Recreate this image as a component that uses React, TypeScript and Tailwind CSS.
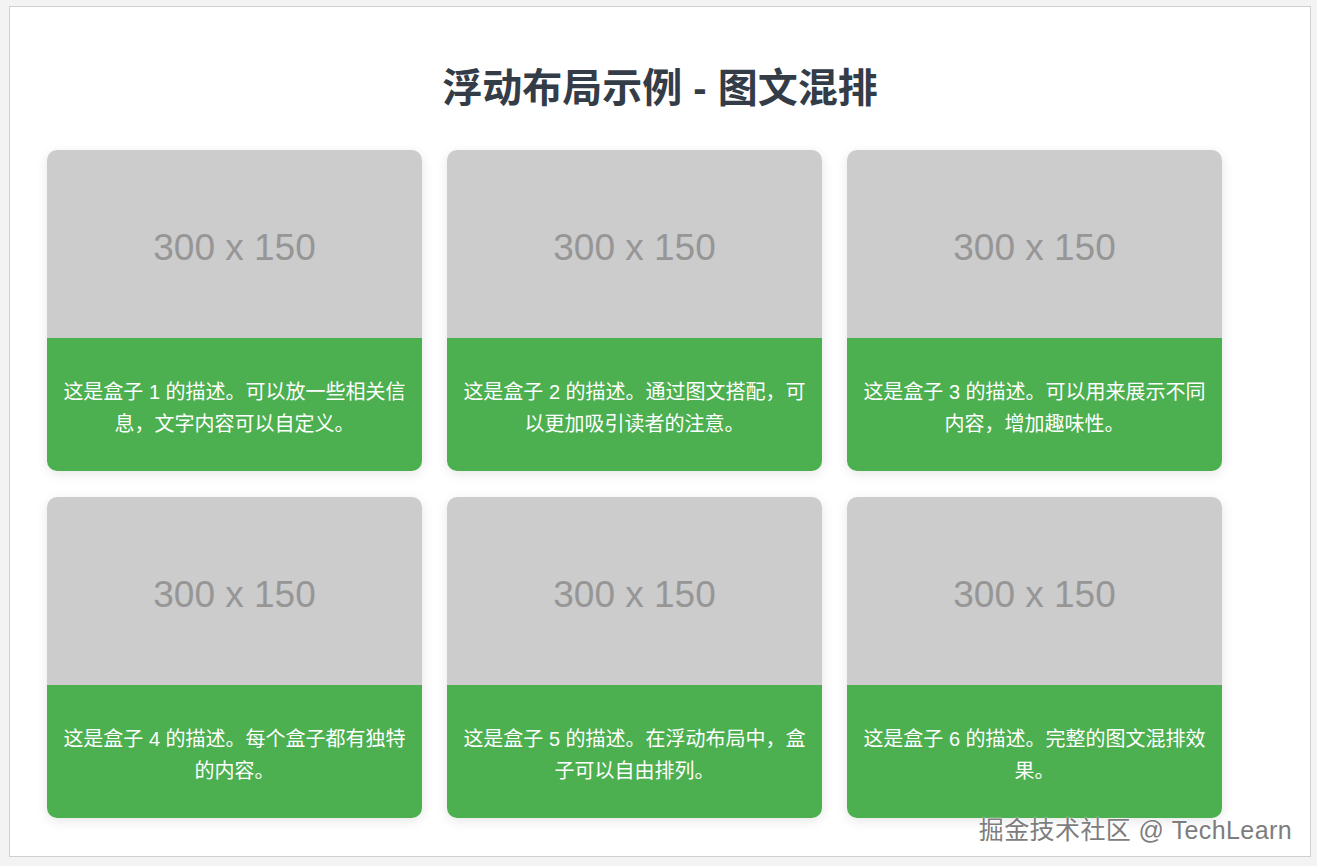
const boxes = [
  "这是盒子 1 的描述。可以放一些相关信息，文字内容可以自定义。",
  "这是盒子 2 的描述。通过图文搭配，可以更加吸引读者的注意。",
  "这是盒子 3 的描述。可以用来展示不同内容，增加趣味性。",
  "这是盒子 4 的描述。每个盒子都有独特的内容。",
  "这是盒子 5 的描述。在浮动布局中，盒子可以自由排列。",
  "这是盒子 6 的描述。完整的图文混排效果。",
];

const font = { fontFamily: '"Liberation Sans", Arial, "Noto Sans CJK SC", sans-serif' };

export default function App() {
  return (
    <div className="min-h-[866px] w-[1317px] bg-[#f3f3f3] pl-[9px] pt-[6px]" style={font}>
      <div className="relative h-[851px] w-[1302px] border border-[#cfcfcf] bg-white pl-[37px] pt-[57px]">
        <h1 className="w-[1226px] text-center text-[40px] font-bold leading-[48px] text-[#333c47]">
          浮动布局示例 - 图文混排
        </h1>

        {/* picture cards */}
        <div className="mt-[38px] grid w-[1175px] grid-cols-3 gap-x-[25px] gap-y-[26px]">
          {boxes.map((text, i) => (
            <div
              key={i}
              className="overflow-hidden rounded-[10px] bg-white shadow-[0_3px_12px_rgba(0,0,0,0.1)]"
            >
              <div className="flex h-[188px] items-center justify-center bg-[#cccccc] pt-[8px] text-[37px] text-[#969696]">
                300 x 150
              </div>
              <p className="h-[133px] bg-[#4caf50] px-[15px] pt-[38px] text-center text-[20px] leading-[32px] text-white">
                {text}
              </p>
            </div>
          ))}
        </div>

        <div className="absolute bottom-[11px] right-[18px] text-[25px] leading-[30px] tracking-[0.4px] text-[#7d7d7d] [text-shadow:0_0_2px_#fff,1px_1px_1px_#fff]">
          掘金技术社区 @ TechLearn
        </div>
      </div>
    </div>
  );
}
